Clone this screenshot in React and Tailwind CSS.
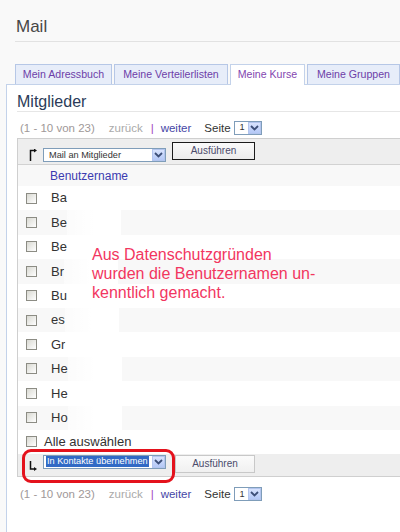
import React from "react";

const names = ["Ba", "Be", "Be", "Br", "Bu", "es", "Gr", "He", "He", "Ho"];

const Chevron = () => (
  <svg width="9" height="6" viewBox="0 0 9 6">
    <path d="M1 1 L4.5 4.5 L8 1" fill="none" stroke="#3d4f78" strokeWidth="1.8" />
  </svg>
);

const Select = ({ text, width, active }) => (
  <div
    className={`flex items-center h-[14px] border border-[#7f9db9] bg-white ${width}`}
  >
    <div className="flex-1 h-full flex items-center pl-[2px] pr-[2px] overflow-hidden">
      <span
        className={`text-[9.2px] leading-[11px] whitespace-nowrap px-[1px] ${
          active ? "bg-[#316ac5] text-white" : "text-[#333] pl-[3px]"
        }`}
      >
        {text}
      </span>
    </div>
    <div className="w-[13px] h-[12px] border border-[#b3c5ee] bg-gradient-to-b from-[#d8e3fd] to-[#b4c8f6] flex items-center justify-center">
      <Chevron />
    </div>
  </div>
);

const Checkbox = () => (
  <div className="w-[11px] h-[11px] border border-[#8c8c84] bg-gradient-to-br from-[#d9d9d2] to-white shrink-0" />
);

const Pager = () => (
  <div className="flex items-center h-[15px] text-[11.5px] leading-[14px]">
    <span className="ml-[3px] text-[#a09898]">(1 - 10 von 23)</span>
    <span className="ml-[14px] text-[#aaaaaa]">zurück</span>
    <span className="ml-[8px] text-[#a040c0]">|</span>
    <span className="ml-[7px] text-[#4646a6]">weiter</span>
    <span className="ml-[13px] text-[#333]">Seite</span>
    <div className="ml-[3px]">
      <Select text="1" width="w-[28px]" />
    </div>
  </div>
);

const ArrowUp = () => (
  <svg width="8" height="12" viewBox="0 0 8 12">
    <path d="M1.5 12 V1.5 H5" fill="none" stroke="#111" strokeWidth="1.5" />
    <path d="M5 -0.5 L8 1.5 L5 3.5 Z" fill="#111" />
  </svg>
);

const ArrowDown = () => (
  <svg width="8" height="10" viewBox="0 0 8 10">
    <path d="M1.5 0 V8 H5" fill="none" stroke="#111" strokeWidth="1.5" />
    <path d="M5 6 L8 8 L5 10 Z" fill="#111" />
  </svg>
);

const tabs = [
  { label: "Mein Adressbuch", w: "w-[97px]" },
  { label: "Meine Verteilerlisten", w: "w-[114px]" },
  { label: "Meine Kurse", w: "w-[75px]", active: true },
  { label: "Meine Gruppen", w: "w-[93px]" },
];

export default function App() {
  return (
    <div className="relative w-[400px] h-[532px] overflow-hidden bg-[#f9f9f9] flex flex-col font-['Liberation_Sans',Arial,sans-serif]">
      <div className="pt-[17px] pl-[16px]">
        <h1 className="text-[17px] leading-[20px] text-[#474747]">Mail</h1>
      </div>
      <div className="ml-[15px] mt-[4px] border-b border-[#e2e2e2]" />

      <div className="mt-[22px] flex items-end pl-[15px] gap-[2px]">
        {tabs.map((t) =>
          t.active ? (
            <div
              key={t.label}
              className={`relative z-10 h-[21px] -mb-px ${t.w} border border-b-0 border-[#c3d2ea] bg-white flex items-center justify-center text-[10.6px] text-[#8446b0]`}
            >
              {t.label}
            </div>
          ) : (
            <div
              key={t.label}
              className={`h-[20px] ${t.w} border border-b-0 border-[#b6c7e6] bg-[#e7edf9] flex items-center justify-center text-[10.6px] text-[#6d3ea8]`}
            >
              {t.label}
            </div>
          )
        )}
      </div>

      <div className="flex-1 ml-[6px] border-l border-t border-[#c3d2ea] bg-white">
        <div className="pl-[10px] pt-[8px]">
          <h2 className="text-[16px] leading-[18px] text-[#2b3b58]">Mitglieder</h2>
          <div className="border-b border-[#e6e6e6]" />

          <div className="mt-[8px]">
            <Pager />
          </div>

          <div className="mt-[3px] border-t border-l border-[#cfcfcf]">
            <div className="h-[26px] bg-[#eeeeee] border-b border-[#d2d2d2] flex items-start">
              <div className="ml-[11px] mt-[10px]">
                <ArrowUp />
              </div>
              <div className="ml-[6px] mt-[9px]">
                <Select text="Mail an Mitglieder" width="w-[123px]" />
              </div>
              <button className="ml-[6px] mt-[3px] w-[83px] h-[18px] border border-[#1c1c1c] bg-gradient-to-b from-[#fafafa] to-[#ececec] text-[10px] text-[#4b4b6b] leading-none">
                Ausführen
              </button>
            </div>

            <div className="h-[21px] bg-[#f8f8f8] flex items-center pl-[32px] text-[12px] text-[#3b3bb0]">
              Benutzername
            </div>

            {names.map((n, i) => (
              <div
                key={i}
                className={`h-[24.4px] flex items-center ${
                  i % 2 === 1 ? "bg-[#f8f8f8]" : "bg-white"
                }`}
              >
                <div className="ml-[8px]">
                  <Checkbox />
                </div>
                <span className="ml-[14px] whitespace-nowrap text-[13px] text-[#333]">
                  {n}
                </span>
                <div className="h-full w-[54px] bg-gradient-to-r from-white/50 via-white to-white" />
              </div>
            ))}

            <div className="h-[24px] flex items-center bg-white">
              <div className="ml-[8px]">
                <Checkbox />
              </div>
              <span className="ml-[7px] text-[13px] text-[#333]">Alle auswählen</span>
            </div>

            <div className="h-[23px] bg-[#eeeeee] border-b border-[#cfcfcf] flex items-start">
              <div className="ml-[11px] mt-[7px]">
                <ArrowDown />
              </div>
              <div className="ml-[6px] mt-[1px]">
                <Select text="In Kontakte übernehmen" width="w-[123px]" active />
              </div>
              <button className="ml-[9px] mt-[1px] w-[80px] h-[18px] border border-[#c8c8c8] bg-gradient-to-b from-[#fbfbfb] to-[#f0f0f0] text-[10px] text-[#4b4b6b] leading-none">
                Ausführen
              </button>
            </div>
          </div>

          <div className="mt-[10px]">
            <Pager />
          </div>
        </div>
      </div>

      <p className="absolute left-[92px] top-[245px] text-[16px] leading-[19px] text-[#f2365f]">
        Aus Datenschutzgründen
        <br />
        wurden die Benutzernamen un-
        <br />
        kenntlich gemacht.
      </p>

      <div className="absolute left-[22px] top-[449px] w-[153px] h-[34px] border-[3px] border-[#e4121c] rounded-[9px]" />
    </div>
  );
}
